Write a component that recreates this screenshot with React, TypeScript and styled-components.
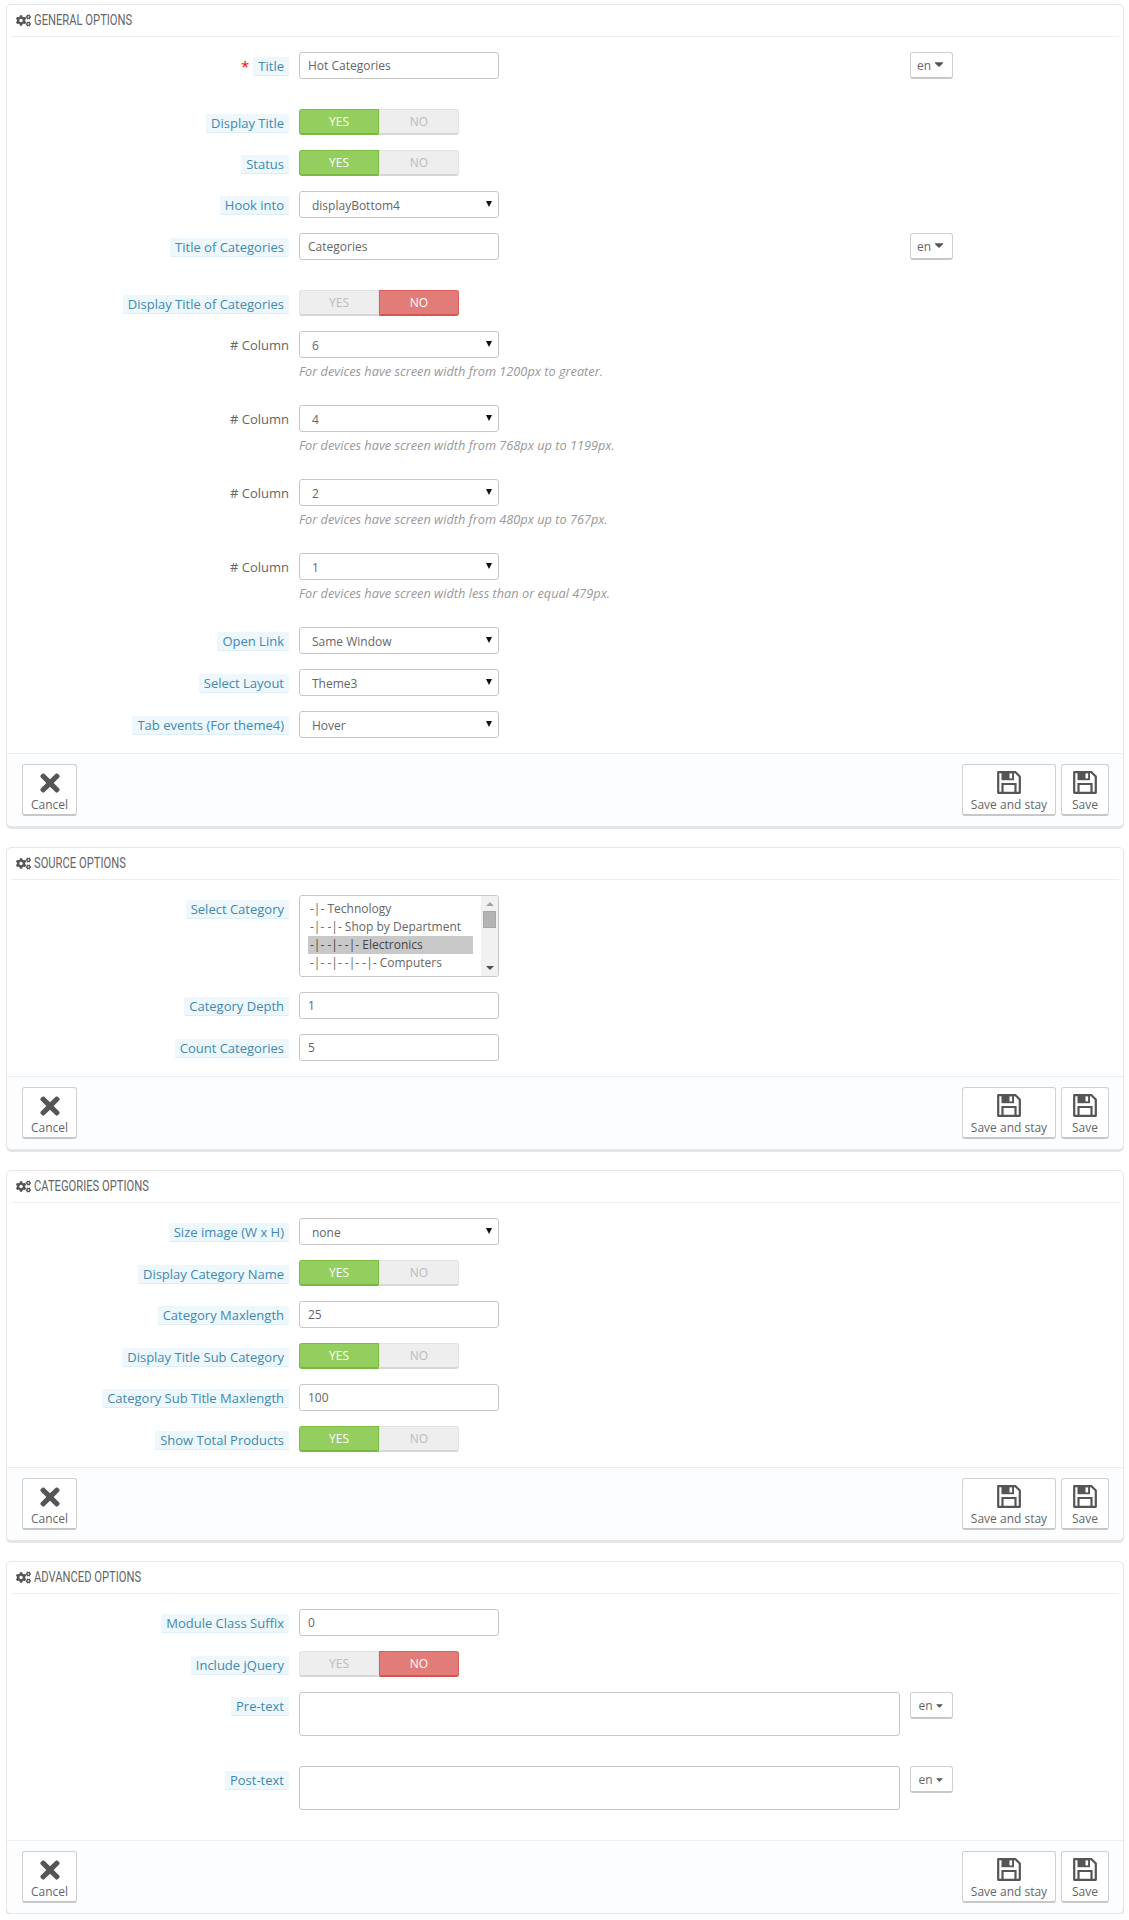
import React from "react";
import styled, { createGlobalStyle } from "styled-components";
import { FaCogs, FaTimes, FaCaretDown } from "react-icons/fa";

const GlobalStyle = createGlobalStyle`
  html, body {
    margin: 0;
    padding: 0;
    background: #fff;
    font-family: "Open Sans", "Liberation Sans", sans-serif;
    font-size: 12px;
    color: #666;
  }
`;

const Page = styled.div`
  width: 1129px;
  box-sizing: border-box;
  padding: 4px 5px 0 6px;
  display: flex;
  flex-direction: column;
  gap: 20px;
`;

const Panel = styled.section`
  border: 1px solid #e6e6e6;
  border-radius: 5px;
  box-shadow: 0 2px 0 rgba(0, 0, 0, 0.1);
  background: #fff;
`;

const PanelHeading = styled.h3`
  margin: 0 4px;
  height: 32px;
  box-sizing: border-box;
  padding-top: 6px;
  border-bottom: 1px solid #eee;
  display: flex;
  align-items: flex-start;
  gap: 3px;
  font-size: 14px;
  line-height: 18px;
  font-weight: 400;
  color: #666;
  svg {
    flex: none;
    width: 15px;
    height: 15px;
    margin: 2px 0 0 5px;
    color: #555;
  }
`;

const HeadingText = styled.span`
  font-family: "Roboto", "Liberation Sans", sans-serif;
  text-transform: uppercase;
  white-space: nowrap;
  transform: scaleX(0.8);
  transform-origin: left center;
`;

const PanelBody = styled.div`
  padding: 15px 0;
  display: flex;
  flex-direction: column;
  gap: 15px;
`;

const Row = styled.div<{ $extra?: number }>`
  display: flex;
  align-items: stretch;
  margin-bottom: ${(p) => p.$extra || 0}px;
`;

const LabelCol = styled.div`
  width: 282px;
  flex: none;
  height: 26px;
  box-sizing: border-box;
  padding-top: 2px;
  display: flex;
  align-items: center;
  justify-content: flex-end;
  gap: 4px;
`;

const Required = styled.span`
  color: #f00;
  font-size: 15px;
  line-height: 12px;
`;

const HintLabel = styled.span`
  background: #edf7fc;
  border-bottom: 1px solid #dceef8;
  border-radius: 2px;
  color: #4289b0;
  padding: 0 5px;
  font-size: 13px;
  line-height: 18px;
`;

const PlainLabel = styled.span`
  color: #666;
  font-size: 13px;
  line-height: 18px;
`;

const FieldCol = styled.div<{ $wide?: boolean }>`
  margin-left: 10px;
  width: ${(p) => (p.$wide ? "601px" : "auto")};
`;

const TextInput = styled.input`
  display: block;
  box-sizing: border-box;
  width: 200px;
  height: 27px;
  padding: 0 8px;
  border: 1px solid #c7c7c7;
  border-radius: 3px;
  background: #fff;
  font: 12px "Open Sans", sans-serif;
  color: #666;
  outline: none;
`;

const TextArea = styled.textarea`
  display: block;
  box-sizing: border-box;
  width: 601px;
  height: 44px;
  border: 1px solid #c7c7c7;
  border-radius: 3px;
  background: #fff;
  resize: none;
  outline: none;
`;

const SelectWrap = styled.div`
  position: relative;
  width: 200px;
  height: 27px;
  &::after {
    content: "";
    position: absolute;
    right: 7px;
    top: 10px;
    border-left: 3.5px solid transparent;
    border-right: 3.5px solid transparent;
    border-top: 6px solid #111;
  }
`;

const NativeSelect = styled.select`
  appearance: none;
  display: block;
  box-sizing: border-box;
  width: 100%;
  height: 100%;
  padding: 2px 12px 0;
  border: 1px solid #c7c7c7;
  border-radius: 3px;
  background: #fff;
  font: 12px "Open Sans", sans-serif;
  color: #666;
  outline: none;
`;

const Help = styled.p`
  margin: 4px 0 0;
  height: 28px;
  line-height: 18px;
  font-size: 12.75px;
  font-style: italic;
  color: #999;
`;

const Toggle = styled.div`
  display: flex;
  width: 160px;
  height: 26px;
`;

const ToggleSide = styled.div<{ $state: "yes" | "no" | "off"; $first?: boolean }>`
  flex: 1;
  box-sizing: border-box;
  display: flex;
  align-items: center;
  justify-content: center;
  padding-bottom: 1px;
  font-size: 12px;
  border-radius: ${(p) => (p.$first ? "3px 0 0 3px" : "0 3px 3px 0")};
  background: ${(p) => (p.$state === "yes" ? "#93ce5f" : p.$state === "no" ? "#e27c79" : "#eee")};
  border: 1px solid ${(p) => (p.$state === "yes" ? "#7dbd44" : p.$state === "no" ? "#d9605c" : "#e3e3e3")};
  border-bottom: 2px solid ${(p) => (p.$state === "yes" ? "#79b93f" : p.$state === "no" ? "#d9534f" : "#d6d6d6")};
  color: ${(p) => (p.$state === "off" ? "#bbb" : "#fff")};
`;

const LangButton = styled.div<{ $big?: boolean }>`
  flex: none;
  margin-left: 10px;
  box-sizing: border-box;
  width: 43px;
  height: 27px;
  display: flex;
  align-items: center;
  justify-content: center;
  gap: 1px;
  border: 1px solid #d0d0d0;
  border-bottom: 2px solid #c7c7c7;
  border-radius: 3px;
  background: #fff;
  color: #666;
  svg {
    width: ${(p) => (p.$big ? 14 : 11)}px;
    height: ${(p) => (p.$big ? 14 : 11)}px;
    margin-top: ${(p) => (p.$big ? -2 : 0)}px;
    color: #555;
  }
`;

const ListBox = styled.div`
  box-sizing: border-box;
  width: 200px;
  height: 82px;
  border: 1px solid #c7c7c7;
  border-radius: 3px;
  display: flex;
  justify-content: space-between;
  overflow: hidden;
`;

const ListOptions = styled.div`
  flex: none;
  width: 165px;
  padding: 4px 0 0 8px;
`;

const ListOption = styled.div<{ $selected?: boolean }>`
  height: 18px;
  line-height: 18px;
  padding-left: 2px;
  white-space: nowrap;
  color: ${(p) => (p.$selected ? "#444" : "#666")};
  background: ${(p) => (p.$selected ? "#c8c8c8" : "transparent")};
`;

const ScrollTrack = styled.div`
  width: 17px;
  background: #f1f1f1;
  display: flex;
  flex-direction: column;
  align-items: center;
`;

const ScrollUp = styled.div`
  margin-top: 6px;
  border-left: 4px solid transparent;
  border-right: 4px solid transparent;
  border-bottom: 4px solid #a3a3a3;
`;

const ScrollThumb = styled.div`
  margin-top: 5px;
  width: 13px;
  height: 17px;
  background: #b4b4b4;
  border: 1px solid #a8a8a8;
  box-sizing: border-box;
`;

const ScrollDown = styled.div`
  margin-top: auto;
  margin-bottom: 6px;
  border-left: 4px solid transparent;
  border-right: 4px solid transparent;
  border-top: 4px solid #505050;
`;

const PanelFooter = styled.div`
  display: flex;
  align-items: flex-start;
  height: 73px;
  box-sizing: border-box;
  padding: 10px 14px 0 15px;
  gap: 5px;
  background: #fcfdfe;
  border-top: 1px solid #eee;
  border-radius: 0 0 5px 5px;
`;

const Spacer = styled.div`
  flex: 1;
`;

const ActionButton = styled.div<{ $width: number }>`
  box-sizing: border-box;
  width: ${(p) => p.$width}px;
  height: 52px;
  display: flex;
  flex-direction: column;
  align-items: center;
  border: 1px solid #d0d0d0;
  border-bottom: 2px solid #c7c7c7;
  border-radius: 3px;
  background: #fff;
  color: #666;
  font-size: 12px;
  line-height: 16px;
`;

const ActionIcon = styled.div<{ $top: number }>`
  height: 32px;
  padding-top: ${(p) => p.$top}px;
  box-sizing: border-box;
  color: #555;
  display: flex;
  align-items: flex-start;
  svg {
    display: block;
  }
`;

function SaveIcon() {
  return (
    <svg width="24" height="23" viewBox="0 0 24 23" fill="none">
      <path d="M1.2 1.2H18.5L22.8 5.5V21.8H1.2Z" stroke="#555" strokeWidth="2.2" strokeLinejoin="round" />
      <path d="M4.5 1.2H17V9.2H4.5Z" fill="#555" />
      <rect x="12.5" y="2.4" width="2.6" height="5" fill="#fff" />
      <path d="M5.5 21.8V13H18.5V21.8" stroke="#555" strokeWidth="2.2" />
    </svg>
  );
}

function Footer() {
  return (
    <PanelFooter>
      <ActionButton $width={55}>
        <ActionIcon $top={4}>
          <FaTimes size={28} />
        </ActionIcon>
        Cancel
      </ActionButton>
      <Spacer />
      <ActionButton $width={94}>
        <ActionIcon $top={6}>
          <SaveIcon />
        </ActionIcon>
        Save and stay
      </ActionButton>
      <ActionButton $width={48}>
        <ActionIcon $top={6}>
          <SaveIcon />
        </ActionIcon>
        Save
      </ActionButton>
    </PanelFooter>
  );
}

function Heading({ title }: { title: string }) {
  return (
    <PanelHeading>
      <FaCogs />
      <HeadingText>{title}</HeadingText>
    </PanelHeading>
  );
}

function Label({ text, plain, required }: { text: string; plain?: boolean; required?: boolean }) {
  return (
    <LabelCol>
      {required && <Required>*</Required>}
      {plain ? <PlainLabel>{text}</PlainLabel> : <HintLabel>{text}</HintLabel>}
    </LabelCol>
  );
}

function Lang({ big }: { big?: boolean }) {
  return (
    <LangButton $big={big}>
      en
      <FaCaretDown />
    </LangButton>
  );
}

function InputRow({ label, value, lang, required }: { label: string; value: string; lang?: boolean; required?: boolean }) {
  return (
    <Row $extra={lang ? 15 : 0}>
      <Label text={label} required={required} />
      <FieldCol $wide={lang}>
        <TextInput defaultValue={value} />
      </FieldCol>
      {lang && <Lang big />}
    </Row>
  );
}

function ToggleRow({ label, on }: { label: string; on: boolean }) {
  return (
    <Row>
      <Label text={label} />
      <FieldCol>
        <Toggle>
          <ToggleSide $first $state={on ? "yes" : "off"}>YES</ToggleSide>
          <ToggleSide $state={on ? "off" : "no"}>NO</ToggleSide>
        </Toggle>
      </FieldCol>
    </Row>
  );
}

function SelectRow({ label, value, plain, help }: { label: string; value: string; plain?: boolean; help?: string }) {
  return (
    <Row>
      <Label text={label} plain={plain} />
      <FieldCol>
        <SelectWrap>
          <NativeSelect defaultValue={value}>
            <option>{value}</option>
          </NativeSelect>
        </SelectWrap>
        {help && <Help>{help}</Help>}
      </FieldCol>
    </Row>
  );
}

function AreaRow({ label }: { label: string }) {
  return (
    <Row $extra={15}>
      <Label text={label} />
      <FieldCol $wide>
        <TextArea />
      </FieldCol>
      <Lang />
    </Row>
  );
}

export default function App() {
  return (
    <>
      <GlobalStyle />
      <Page>
        <Panel>
          <Heading title="General Options" />
          <PanelBody>
            <InputRow label="Title" value="Hot Categories" lang required />
            <ToggleRow label="Display Title" on />
            <ToggleRow label="Status" on />
            <SelectRow label="Hook into" value="displayBottom4" />
            <InputRow label="Title of Categories" value="Categories" lang />
            <ToggleRow label="Display Title of Categories" on={false} />
            <SelectRow label="# Column" value="6" plain help="For devices have screen width from 1200px to greater." />
            <SelectRow label="# Column" value="4" plain help="For devices have screen width from 768px up to 1199px." />
            <SelectRow label="# Column" value="2" plain help="For devices have screen width from 480px up to 767px." />
            <SelectRow label="# Column" value="1" plain help="For devices have screen width less than or equal 479px." />
            <SelectRow label="Open Link" value="Same Window" />
            <SelectRow label="Select Layout" value="Theme3" />
            <SelectRow label="Tab events (For theme4)" value="Hover" />
          </PanelBody>
          <Footer />
        </Panel>

        <Panel>
          <Heading title="Source Options" />
          <PanelBody>
            <Row>
              <Label text="Select Category" />
              <FieldCol>
                <ListBox>
                  <ListOptions>
                    <ListOption>-|- Technology</ListOption>
                    <ListOption>-|- -|- Shop by Department</ListOption>
                    <ListOption $selected>-|- -|- -|- Electronics</ListOption>
                    <ListOption>-|- -|- -|- -|- Computers</ListOption>
                  </ListOptions>
                  <ScrollTrack>
                    <ScrollUp />
                    <ScrollThumb />
                    <ScrollDown />
                  </ScrollTrack>
                </ListBox>
              </FieldCol>
            </Row>
            <InputRow label="Category Depth" value="1" />
            <InputRow label="Count Categories" value="5" />
          </PanelBody>
          <Footer />
        </Panel>

        <Panel>
          <Heading title="Categories Options" />
          <PanelBody>
            <SelectRow label="Size image (W x H)" value="none" />
            <ToggleRow label="Display Category Name" on />
            <InputRow label="Category Maxlength" value="25" />
            <ToggleRow label="Display Title Sub Category" on />
            <InputRow label="Category Sub Title Maxlength" value="100" />
            <ToggleRow label="Show Total Products" on />
          </PanelBody>
          <Footer />
        </Panel>

        <Panel>
          <Heading title="Advanced Options" />
          <PanelBody>
            <InputRow label="Module Class Suffix" value="0" />
            <ToggleRow label="Include jQuery" on={false} />
            <AreaRow label="Pre-text" />
            <AreaRow label="Post-text" />
          </PanelBody>
          <Footer />
        </Panel>
      </Page>
    </>
  );
}
